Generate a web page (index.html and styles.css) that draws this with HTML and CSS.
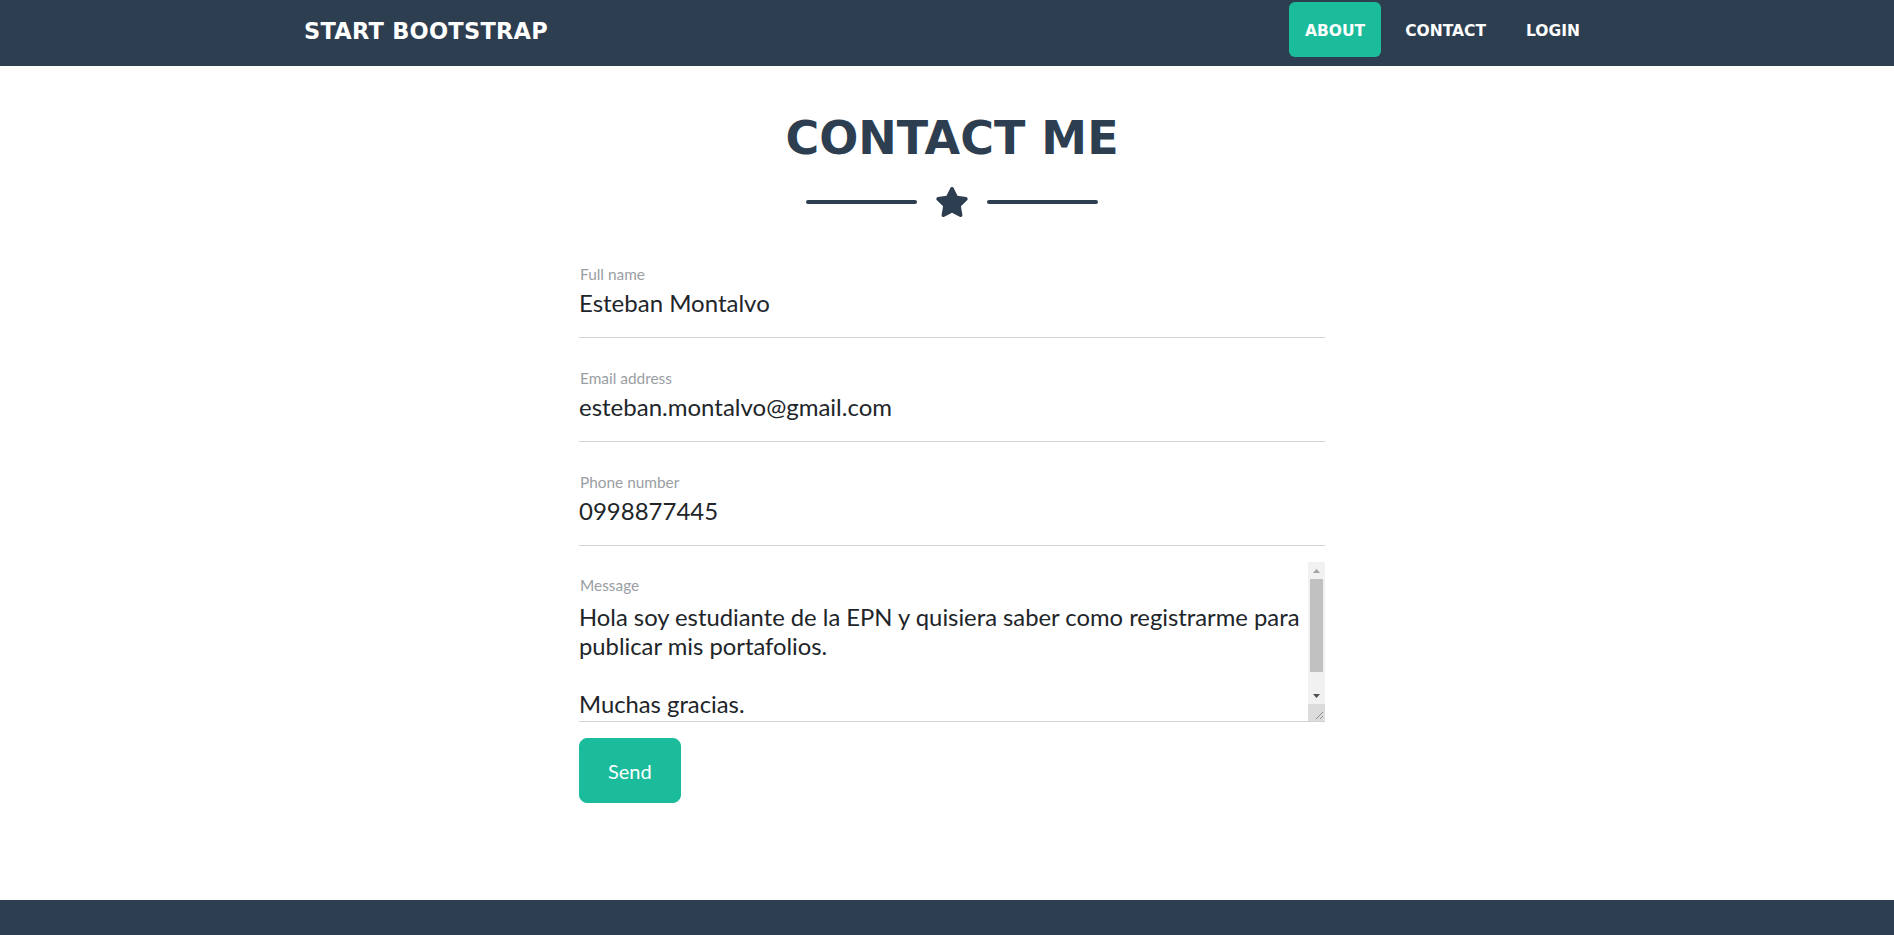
FILE: index.html
```html
<!DOCTYPE html>
<html lang="en">
<head>
<meta charset="utf-8">
<title>Contact Me</title>
<link rel="stylesheet" href="styles.css">
</head>
<body>
<nav class="navbar">
  <div class="shell">
    <div class="nav-container">
      <a class="brand" href="#">Start Bootstrap</a>
      <ul class="nav-links">
        <li><a class="nav-link active" href="#">About</a></li>
        <li><a class="nav-link" href="#">Contact</a></li>
        <li><a class="nav-link" href="#">Login</a></li>
      </ul>
    </div>
  </div>
</nav>
<main class="shell page">
  <section class="contact">
    <h2 class="section-heading">Contact Me</h2>
    <div class="divider">
      <span class="divider-line"></span>
      <svg class="divider-icon" viewBox="0 0 576 512" aria-hidden="true"><path d="M259.3 17.8L194 150.2 47.9 171.5c-26.2 3.8-36.7 36.1-17.7 54.6l105.7 103-25 145.5c-4.5 26.3 23.2 46 46.4 33.7L288 439.6l130.7 68.7c23.2 12.2 50.9-7.4 46.4-33.7l-25-145.5 105.7-103c19-18.5 8.5-50.8-17.7-54.6L382 150.2 316.7 17.8c-11.7-23.6-45.6-23.9-57.4 0z"/></svg>
      <span class="divider-line"></span>
    </div>
    <form class="contact-form">
      <div class="field">
        <label class="field-label" for="name">Full name</label>
        <input class="field-input" id="name" type="text" value="Esteban Montalvo">
      </div>
      <div class="field">
        <label class="field-label" for="email">Email address</label>
        <input class="field-input" id="email" type="email" value="esteban.montalvo@gmail.com">
      </div>
      <div class="field">
        <label class="field-label" for="phone">Phone number</label>
        <input class="field-input" id="phone" type="tel" value="0998877445">
      </div>
      <div class="field-area">
        <textarea class="message" id="message">Hola soy estudiante de la EPN y quisiera saber como registrarme para publicar mis portafolios.

Muchas gracias.</textarea>
        <label class="area-label" for="message">Message</label>
        <div class="scrollbar" aria-hidden="true">
          <span class="sb-btn"><svg viewBox="0 0 7 4" class="sb-arrow"><polygon points="3.5,0 7,4 0,4" fill="#a3a3a3"/></svg></span>
          <span class="sb-track"><span class="sb-thumb"></span></span>
          <span class="sb-btn"><svg viewBox="0 0 7 4" class="sb-arrow"><polygon points="0,0 7,0 3.5,4" fill="#505050"/></svg></span>
          <span class="sb-resizer"><svg viewBox="0 0 17 17" class="sb-grip"><line x1="15" y1="8" x2="8" y2="15" stroke="#8a8a8a" stroke-width="1"/><line x1="15" y1="12" x2="12" y2="15" stroke="#8a8a8a" stroke-width="1"/></svg></span>
        </div>
      </div>
      <button class="btn-send" type="button">Send</button>
    </form>
  </section>
</main>
<footer class="footer"></footer>
</body>
</html>
```
FILE: styles.css
```css
* { box-sizing: border-box; }

html, body {
  margin: 0;
  padding: 0;
}

body {
  font-family: "Lato", "Noto Sans", sans-serif;
  color: #212529;
  background: #ffffff;
  overflow: hidden;
}

.shell {
  padding-left: 10px;
}

/* NAVBAR */
.navbar {
  background: #2c3e50;
  height: 66px;
}

.nav-container {
  max-width: 1320px;
  margin: 0 auto;
  padding: 2px 12px 0 12px;
  display: flex;
  justify-content: space-between;
  align-items: flex-start;
}

.brand {
  display: block;
  height: 55px;
  padding-top: 3px;
  font-family: "DejaVu Sans", sans-serif;
  font-weight: 700;
  font-size: 22.5px;
  letter-spacing: 0.25px;
  line-height: 52px;
  color: #ffffff;
  text-decoration: none;
  text-transform: uppercase;
}

.nav-links {
  list-style: none;
  margin: 0;
  padding: 0;
  display: flex;
}

.nav-links li {
  margin: 0 4px;
}

.nav-link {
  display: block;
  padding: 3px 16px 0 16px;
  height: 55px;
  line-height: 52px;
  border-radius: 6px;
  font-family: "DejaVu Sans", sans-serif;
  font-weight: 700;
  font-size: 15.5px;
  color: #ffffff;
  text-decoration: none;
  text-transform: uppercase;
}

.nav-link.active {
  background: #1abc9c;
}

/* PAGE */
.page {
  padding-top: 45px;
  padding-bottom: 97px;
}

.section-heading {
  margin: 0;
  text-align: center;
  font-family: "DejaVu Sans", sans-serif;
  font-weight: 700;
  font-size: 46px;
  line-height: 55px;
  color: #2c3e50;
  text-transform: uppercase;
}

.divider {
  margin-top: 21px;
  display: flex;
  justify-content: center;
  align-items: center;
  gap: 18px;
}

.divider-line {
  width: 111px;
  height: 4px;
  border-radius: 4px;
  background: #2c3e50;
}

.divider-icon {
  width: 34px;
  height: 30px;
  fill: #2c3e50;
}

/* FORM */
.contact-form {
  width: 746px;
  margin: 33px auto 0 auto;
}

.field {
  padding: 15px 0 20px 0;
  border-bottom: 1px solid #ced4da;
  margin-bottom: 16px;
}

.field-label,
.area-label {
  display: block;
  font-size: 15.4px;
  line-height: 18px;
  color: #9a9ea3;
  padding-left: 1px;
}

.field-label {
  margin-bottom: 5px;
}

.field-input {
  display: block;
  width: 100%;
  height: 29px;
  padding: 0;
  border: none;
  outline: none;
  background: transparent;
  font-family: "Lato", "Noto Sans", sans-serif;
  font-size: 24px;
  color: #212529;
}

.field-area {
  position: relative;
}

.area-label {
  position: absolute;
  top: 14px;
  left: 0;
}

.message {
  display: block;
  width: 100%;
  height: 160px;
  margin: 0;
  padding: 41px 17px 0 0;
  border: none;
  border-bottom: 1px solid #ced4da;
  outline: none;
  resize: none;
  overflow: hidden;
  font-family: "Lato", "Noto Sans", sans-serif;
  font-size: 23.8px;
  line-height: 29px;
  color: #212529;
  background: #ffffff;
}

/* drawn scrollbar overlaying the textarea's right edge */
.scrollbar {
  position: absolute;
  top: 0;
  right: 0;
  width: 17px;
  height: 159px;
  display: flex;
  flex-direction: column;
  background: #f1f1f1;
}

.sb-btn {
  height: 17px;
  display: flex;
  align-items: center;
  justify-content: center;
}

.sb-arrow {
  width: 7px;
  height: 4px;
  display: block;
}

.sb-track {
  flex: 1;
  padding: 0 2px;
}

.sb-thumb {
  display: block;
  height: 93px;
  background: #c1c1c1;
}

.sb-resizer {
  height: 17px;
  background: #dcdcdc;
}

.sb-grip {
  display: block;
  width: 17px;
  height: 17px;
}

.btn-send {
  display: block;
  margin-top: 16px;
  padding: 17px 28px 16px 28px;
  border: 1px solid #1abc9c;
  border-radius: 8px;
  background: #1abc9c;
  color: #ffffff;
  font-family: "Lato", "Noto Sans", sans-serif;
  font-size: 20px;
  line-height: 30px;
  cursor: pointer;
}

/* FOOTER */
.footer {
  background: #2c3e50;
  height: 240px;
}
```
